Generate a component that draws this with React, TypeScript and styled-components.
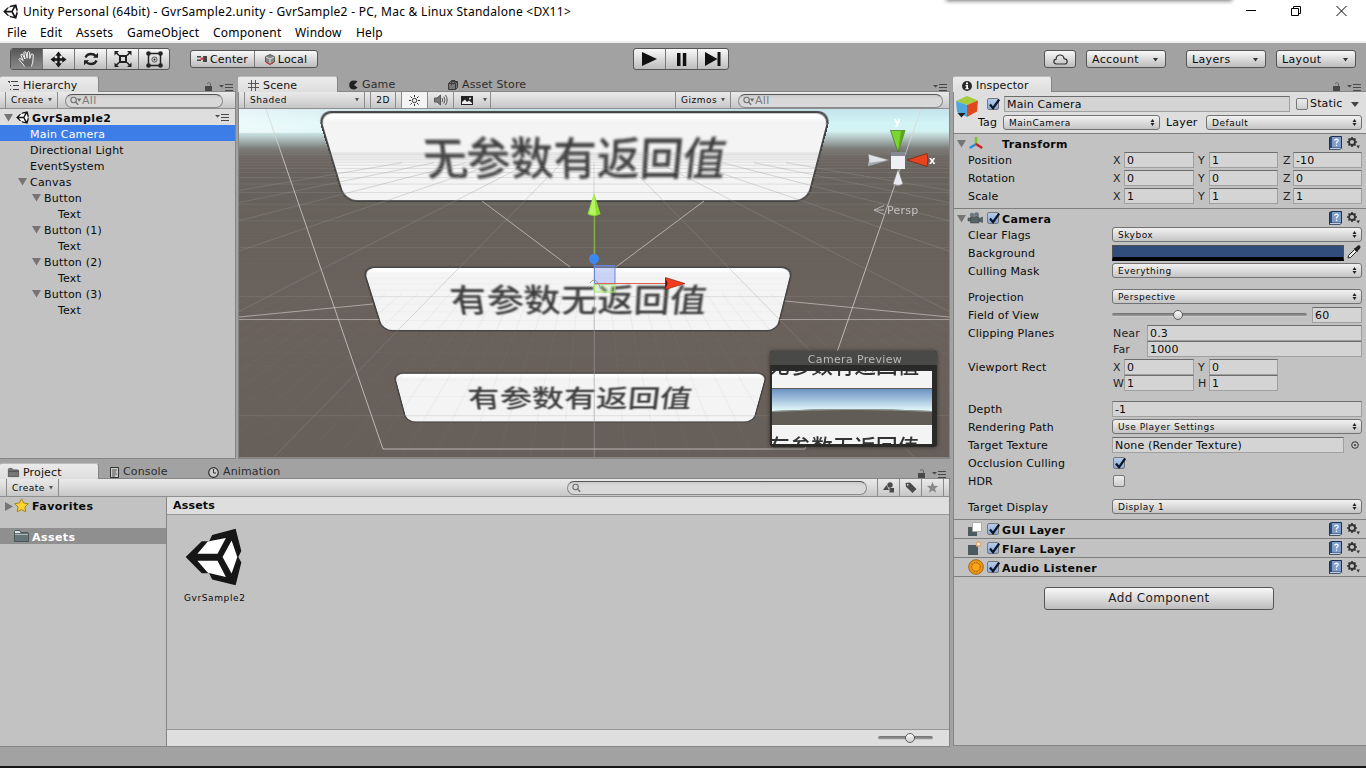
import React from "react";
import styled, { createGlobalStyle, css } from "styled-components";

const ui = `"DejaVu Sans", Verdana, sans-serif`;

const Global = createGlobalStyle`
  * { box-sizing: border-box; }
  html, body { margin: 0; padding: 0; }
  body { width: 1366px; height: 768px; overflow: hidden; background: #a2a2a2; }
`;

/* ---------- shared parts ---------- */

const Svg = styled.svg`
  display: block;
  flex: none;
  overflow: visible;
`;

const Window = styled.div`
  width: 1366px;
  height: 768px;
  display: flex;
  flex-direction: column;
  font: 11px/16px ${ui};
  letter-spacing: 0.15px;
  color: #0a0a0a;
  background: #a2a2a2;
  white-space: nowrap;
  position: relative;
`;

const Gap = styled.div<{ $w?: number; $h?: number }>`
  flex: none;
  width: ${(p) => (p.$w ?? 0) + "px"};
  height: ${(p) => (p.$h ?? 0) + "px"};
`;

const Spring = styled.div`
  flex: 1;
`;

/* ---------- title and menu ---------- */

const TitleBar = styled.header`
  height: 22px;
  flex: none;
  display: flex;
  align-items: center;
  background: #fff;
  padding: 0 19px 0 3px;
`;

const TitleText = styled.span`
  font: 12px/22px "Noto Sans", sans-serif;
  letter-spacing: 0.28px;
  color: #000;
  margin-left: 5px;
  padding-top: 2px;
`;

const WindowControls = styled.div`
  display: flex;
  align-items: center;
  gap: 35px;
  margin-left: auto;
`;

const TopShadow = styled.div`
  position: absolute;
  left: 946px;
  top: -6px;
  width: 286px;
  height: 6px;
  box-shadow: 0 1px 4px rgba(0, 0, 0, 0.55);
`;

const MenuBar = styled.nav`
  height: 21px;
  flex: none;
  display: flex;
  background: #fff;
  border-bottom: 2px solid #f0f0f0;
  padding-left: 7px;
`;

const MenuItem = styled.span<{ $w: number }>`
  font: 12px/21px "Noto Sans", sans-serif;
  letter-spacing: 0.2px;
  color: #000;
  width: ${(p) => p.$w}px;
`;

/* ---------- main toolbar ---------- */

const MainToolbar = styled.div`
  height: 33px;
  flex: none;
  display: flex;
  align-items: flex-start;
  padding: 5px 10px 0;
`;

const raised = css`
  background: linear-gradient(#f8f8f8, #d8d8d8 55%, #bcbcbc);
  border: 1px solid #555;
  border-radius: 3px;
`;

const ButtonGroup = styled.div<{ $small?: boolean }>`
  ${raised}
  display: flex;
  overflow: hidden;
  height: ${(p) => (p.$small ? 18 : 22)}px;
  margin-top: ${(p) => (p.$small ? 2 : 0)}px;
`;

const Segment = styled.div<{ $w: number; $active?: boolean }>`
  width: ${(p) => p.$w}px;
  display: flex;
  align-items: center;
  justify-content: center;
  gap: 3px;
  & + & {
    border-left: 1px solid #777;
  }
  & > span {
    padding-top: 1px;
  }
  ${(p) =>
    p.$active &&
    css`
      background: linear-gradient(#555, #7c7c7c 70%, #888);
    `}
`;

const MenuButton = styled.div<{ $w: number }>`
  ${raised}
  width: ${(p) => p.$w}px;
  height: 18px;
  margin-top: 2px;
  display: flex;
  align-items: center;
  justify-content: space-between;
  padding: 1px 7px 0 5px;
  letter-spacing: 0.35px;
`;

/* ---------- docked panels ---------- */

const Workspace = styled.div`
  height: 671px;
  flex: none;
  display: flex;
`;

const LeftDock = styled.div`
  width: 950px;
  display: flex;
  flex-direction: column;
`;

const UpperDock = styled.div`
  height: 383px;
  display: flex;
`;

const Panel = styled.section<{ $w: number; $h: number }>`
  width: ${(p) => p.$w}px;
  height: ${(p) => p.$h}px;
  flex: none;
  display: flex;
  flex-direction: column;
`;

const TabStrip = styled.div`
  height: 15px;
  flex: none;
  display: flex;
  position: relative;
`;

const Tab = styled.div<{ $w: number; $active?: boolean; $pad?: number }>`
  width: ${(p) => p.$w}px;
  height: 16px;
  display: flex;
  align-items: center;
  gap: 4px;
  padding: 2px 0 0 ${(p) => p.$pad ?? 8}px;
  color: #2c2c2c;
  ${(p) =>
    p.$active &&
    css`
      padding-top: 2px;
      color: #111;
      background: linear-gradient(#eaeaea, #dedede);
      border-right: 1px solid #858585;
      border-top: 1px solid #bbb;
      border-radius: 2px 3px 0 0;
    `}
`;

const StripTools = styled.div<{ $end?: number }>`
  margin-left: auto;
  display: flex;
  align-items: flex-end;
  gap: 6px;
  padding-right: ${(p) => p.$end ?? 3}px;
`;

const PanelBody = styled.div<{ $bg?: string }>`
  flex: 1;
  min-height: 0;
  display: flex;
  flex-direction: column;
  background: ${(p) => p.$bg ?? "#c2c2c2"};
  border: 1px solid #858585;
  border-left-width: 0;
`;

const SceneBody = styled(PanelBody)`
  border-width: 1px 1px 2px 1px;
`;

const PanelToolbar = styled.div<{ $h?: number }>`
  height: ${(p) => p.$h ?? 17}px;
  flex: none;
  display: flex;
  align-items: stretch;
  background: linear-gradient(#e9e9e9, #dadada 50%, #c6c6c6);
  border-bottom: 1px solid #8f8f8f;
  font-size: 9px;
  letter-spacing: 0.5px;
`;

const Cell = styled.div<{ $w: number; $pad?: number; $on?: boolean; $line?: boolean; $center?: boolean }>`
  width: ${(p) => p.$w}px;
  flex: none;
  display: flex;
  align-items: center;
  justify-content: ${(p) => (p.$center ? "center" : "space-between")};
  padding: 0 ${(p) => p.$pad ?? 0}px;
  border-right: ${(p) => (p.$line === false ? 0 : 1)}px solid #8b8b8b;
  background: ${(p) => (p.$on ? "#f4f4f4" : "transparent")};
`;

const Search = styled.div<{ $w: number }>`
  width: ${(p) => p.$w}px;
  height: 14px;
  margin-top: 2px;
  flex: none;
  display: flex;
  align-items: center;
  padding: 0 0 1px 4px;
  gap: 0;
  border: 1px solid #8a8a8a;
  border-top-color: #555;
  border-radius: 7px;
  background: linear-gradient(#c9c9c9, #d8d8d8 30%, #d8d8d8);
  font-size: 11px;
  line-height: 11px;
  letter-spacing: 0.3px;
  color: #7b7b7b;
`;

/* ---------- hierarchy ---------- */

const TreeRow = styled.div<{ $depth?: number; $selected?: boolean; $scene?: boolean }>`
  height: 16px;
  flex: none;
  display: flex;
  align-items: center;
  padding: 0 6px 0 ${(p) => 4 + (p.$depth ?? 0) * 14}px;
  line-height: 16px;
  letter-spacing: 0.2px;
  ${(p) => p.$selected && "background: #3d7de8; color: #fff;"}
  ${(p) => p.$scene && "background: #dedede; font-weight: bold; letter-spacing: .42px;"}
`;

const TreeName = styled.span`
  padding-top: 3px;
`;

const Fold = styled.span`
  width: 12px;
  display: flex;
  justify-content: flex-start;
`;

/* ---------- scene ---------- */

const SceneView = styled.div`
  position: relative;
  width: 710px;
  height: 348px;
  overflow: hidden;
  background:
    linear-gradient(90deg, rgba(255, 255, 255, 0.6), rgba(255, 255, 255, 0) 35%) 0 0 / 100% 24px no-repeat,
    linear-gradient(#c3e3ea, #d2f4f6 14px, #d3f2f2 22px, #a9b8b6 31px, #7f807d 39px, #6b6460 47px, #66615a 90px, #6a615c 200px, #675f5a);
`;

const Quad = styled.div<{ $m: string }>`
  position: absolute;
  left: 0;
  top: 0;
  width: 480px;
  height: 90px;
  display: flex;
  align-items: center;
  justify-content: center;
  transform-origin: 0 0;
  transform: ${(p) => p.$m};
  background: linear-gradient(#fff 3px, #f4f4f4 8px, #f4f4f4);
  border: 2px solid #444;
  border-radius: 14px;
`;

const QuadLabel = styled.span`
  font: 500 42.5px/86px "Noto Sans CJK SC", sans-serif;
  letter-spacing: 0;
  color: #3c3c3c;
  padding-bottom: 6px;
  transform: scaleY(1.05);
  filter: blur(1.2px);
`;

const Overlay = styled(Svg)`
  position: absolute;
  left: 0;
  top: 0;
`;

const Preview = styled.div`
  position: absolute;
  left: 531px;
  top: 242px;
  width: 167px;
  height: 96px;
  border-radius: 3px;
  overflow: hidden;
  background: #2a2b29;
  box-shadow: 0 0 4px rgba(0, 0, 0, 0.5);
`;

const PreviewTitle = styled.div`
  height: 14px;
  line-height: 17px;
  text-align: center;
  padding-left: 3px;
  background: #494947;
  color: #b9b9b9;
  letter-spacing: 0.35px;
`;

const PreviewImage = styled.div`
  width: 160px;
  height: 73px;
  margin: 6px 0 0 2px;
  display: flex;
  flex-direction: column;
  overflow: hidden;
`;

const PreviewStrip = styled.div<{ $h: number; $shift: number }>`
  height: ${(p) => p.$h}px;
  flex: none;
  overflow: hidden;
  background: #f4f4f4;
  & > span {
    display: block;
    margin: ${(p) => p.$shift}px 0 0 -4px;
    font: 500 21.6px/24px "Noto Sans CJK SC", sans-serif;
    letter-spacing: 0;
    color: #333;
    filter: blur(0.6px);
  }
`;

/* ---------- project ---------- */

const ProjectSplit = styled.div`
  flex: 1;
  min-height: 0;
  display: flex;
`;

const Favorites = styled.div`
  width: 167px;
  border-right: 1px solid #858585;
`;

const FolderRow = styled.div<{ $selected?: boolean; $pad: number }>`
  height: 16px;
  display: flex;
  align-items: center;
  gap: 3px;
  padding-left: ${(p) => p.$pad}px;
  font-weight: bold;
  letter-spacing: 0.45px;
  ${(p) => p.$selected && "background: #8f8f8f; color: #fff;"}
  & > span {
    padding-top: 3px;
  }
`;

const AssetPane = styled.div`
  flex: 1;
  display: flex;
  flex-direction: column;
`;

const Crumb = styled.div`
  height: 18px;
  flex: none;
  background: #dedede;
  border-bottom: 1px solid #979797;
  font-weight: bold;
  line-height: 18px;
  padding-left: 6px;
  letter-spacing: 0.2px;
`;

const AssetGrid = styled.div`
  flex: 1;
  padding: 13px 0 0 17px;
`;

const AssetItem = styled.figure`
  width: 62px;
  margin: 0;
  display: flex;
  flex-direction: column;
  align-items: flex-start;
  padding-left: 1px;
`;

const AssetName = styled.figcaption`
  font-size: 9px;
  letter-spacing: 0.6px;
  line-height: 12px;
  margin-top: 6px;
  margin-left: -1px;
`;

const AssetFooter = styled.div`
  height: 17px;
  flex: none;
  background: #dedede;
  border-top: 1px solid #979797;
  display: flex;
  align-items: center;
  justify-content: flex-end;
  padding-right: 16px;
`;

const Track = styled.div<{ $w: number; $pos: number }>`
  width: ${(p) => p.$w}px;
  height: 4px;
  flex: none;
  border-radius: 2px;
  background: linear-gradient(#6f6f6f, #9c9c9c);
  border-bottom: 1px solid #ccc;
  display: flex;
  align-items: center;
  padding-left: ${(p) => p.$pos}px;
`;

const Knob = styled.span`
  width: 10px;
  height: 10px;
  flex: none;
  border-radius: 50%;
  border: 1px solid #5f5f5f;
  background: linear-gradient(#fafafa, #cdcdcd);
`;

/* ---------- inspector ---------- */

const InspectorHeader = styled.div`
  height: 42px;
  flex: none;
  background: #dedede;
  border-bottom: 1px solid #7e7e7e;
  display: flex;
  padding: 4px 4px 0 2px;
`;

const HeaderLines = styled.div`
  flex: 1;
  display: flex;
  flex-direction: column;
  gap: 3px;
`;

const Line = styled.div<{ $pad?: number }>`
  height: 16px;
  display: flex;
  align-items: center;
  padding-left: ${(p) => p.$pad ?? 0}px;
`;

const Field = styled.div<{ $w: number }>`
  width: ${(p) => p.$w}px;
  height: 16px;
  flex: none;
  line-height: 15px;
  padding-left: 2px;
  background: #d4d4d4;
  border: 1px solid #a0a0a0;
  border-top-color: #6c6c6c;
`;

const PopupBox = styled.div<{ $w: number }>`
  width: ${(p) => p.$w}px;
  height: 15px;
  flex: none;
  align-self: flex-start;
  display: flex;
  align-items: center;
  justify-content: space-between;
  padding: 0 4px 0 5px;
  background: linear-gradient(#f1f1f1, #dcdcdc 50%, #c4c4c4);
  border: 1px solid #727272;
  border-radius: 3px;
  font-size: 9px;
  letter-spacing: 0.5px;
`;

const CheckBox = styled.span<{ $on?: boolean }>`
  width: 12px;
  height: 12px;
  flex: none;
  display: block;
  border: 1px solid #777;
  border-radius: 2px;
  background: ${(p) => (p.$on ? "linear-gradient(#b7cbe8, #87a9da)" : "linear-gradient(#ececec, #cfcfcf)")};
`;

const Component = styled.div<{ $h: number }>`
  height: ${(p) => p.$h}px;
  flex: none;
  border-bottom: 1px solid #7e7e7e;
  display: flex;
  flex-direction: column;
`;

const ComponentHead = styled.div`
  height: 18px;
  flex: none;
  display: flex;
  align-items: center;
  padding: 0 6px 0 3px;
  font-weight: bold;
  letter-spacing: 0.35px;
`;

const HeadTitle = styled.span`
  padding: 3px 0 0 3px;
`;

const IconSlot = styled.span<{ $w: number }>`
  width: ${(p) => p.$w}px;
  flex: none;
  display: flex;
  align-items: center;
`;

const PropRow = styled.div<{ $h?: number }>`
  height: ${(p) => p.$h ?? 18}px;
  flex: none;
  display: flex;
  align-items: flex-start;
  padding-left: 14px;
`;

const PropLabel = styled.span`
  width: 144px;
  flex: none;
  line-height: 17px;
`;

const AxisLabel = styled.span<{ $w: number }>`
  width: ${(p) => p.$w}px;
  flex: none;
  padding-left: 1px;
  line-height: 17px;
  color: #222;
`;

const Swatch = styled.div`
  width: 232px;
  height: 16px;
  flex: none;
  background: #304d7b;
  border: 1px solid #505050;
  border-bottom: 4px solid #000;
`;

const AddButton = styled.button`
  ${raised}
  width: 230px;
  height: 23px;
  margin: 10px 0 0 90px;
  padding: 0;
  font: 12px/19px ${ui};
  letter-spacing: 0.35px;
  color: #222;
`;

const StatusBar = styled.footer`
  height: 21px;
  flex: none;
  display: flex;
  align-items: flex-end;
  border-bottom: 2px solid #161616;
`;

/* ---------- icons ---------- */

const UnityLogo = ({ size, h }: { size: number; h: number }) => (
  <Svg width={size} height={h} viewBox="555 217 170 176" preserveAspectRatio="none">
    <path
      fill="#161616"
      d="M557 305 605 257H627L636 238 706 219 723 287 714 305 723 322 706 391 636 373 627 354H605Z"
    />
    <path
      fill="#fff"
      d="M592 295 623 258 677 247 652 295ZM592 316H652L677 366 623 353ZM694 255 711 305 694 355 667 305Z"
    />
  </Svg>
);

const Caret = ({ w = 5, fill = "#333" }: { w?: number; fill?: string }) => (
  <Svg width={w} height={w > 5 ? 5 : 3.5} viewBox="0 0 6 4" preserveAspectRatio="none">
    <path fill={fill} d="M0 0H6L3 4Z" />
  </Svg>
);

const FoldIcon = ({ open = true }: { open?: boolean }) => (
  <Svg width={9} height={9} viewBox="0 0 9 9">
    <path fill="#757575" d={open ? "M0 1H9L4.5 8.5Z" : "M0 0 8 4.5 0 9Z"} />
  </Svg>
);

const Hamburger = () => (
  <Svg width={14} height={8} viewBox="0 0 14 8">
    <path fill="#484848" d="M0 2H5L2.5 4.5ZM6 1H14V2H6ZM6 4H14V5H6ZM6 7H14V8H6Z" />
  </Svg>
);

const Lock = () => (
  <Svg width={8} height={9} viewBox="0 0 8 9">
    <path fill="#484848" d="M0 4H7V9H0Z" />
    <path fill="none" stroke="#666" d="M2 1.6Q4-.4 5.5 1.5V4" />
  </Svg>
);

const Magnifier = ({ caret = true }: { caret?: boolean }) => (
  <Svg width={12} height={9} viewBox="0 0 12 9">
    <circle cx="3.600" cy="4" r="2.700" fill="none" stroke="#707070" strokeWidth="1.100" />
    <path d="M5.600 6 8.200 8.800" stroke="#707070" strokeWidth="1.300" />
    {caret && <path fill="#707070" d="M6.800 2.500H11.500L9.200 5.700Z" />}
  </Svg>
);

const UpDown = () => (
  <Svg width={5} height={7} viewBox="0 0 5 7">
    <path fill="#222" d="M0.500 3H4.500L2.500 0ZM0.500 4H4.500L2.500 7Z" />
  </Svg>
);

const HandIcon = () => (
  <Svg width={18} height={18} viewBox="0 0 18 18">
    <path
      fill="#666"
      stroke="#f4f4f4"
      strokeWidth="1"
      strokeLinejoin="round"
      d="M6.500 16.500Q5.500 14 3.500 12.500L1 9.500Q1.200 8 3 8.800L5.200 10.800 3 5.500Q2.800 3.600 4.500 4.300L7 9 5.800 2.800Q6.200 1 7.800 2.200L9.200 8.200 9.500 2.300Q10.500.8 11.600 2.300L11.800 8.500 13.200 4.200Q14.700 3.300 15.300 5L14.800 12Q14 14 13.500 16.500"
    />
  </Svg>
);

const MoveIcon = () => (
  <Svg width={17} height={17} viewBox="0 0 18 18">
    <path
      fill="#181818"
      d="M9 0.500 12.500 5H10.300V7.700H13V5.500L17.500 9 13 12.500V10.300H10.300V13H12.500L9 17.500 5.500 13H7.700V10.300H5V12.500L.5 9 5 5.500V7.700H7.700V5H5.500Z"
    />
  </Svg>
);

const RotateIcon = () => (
  <Svg width={16} height={16} viewBox="0 0 16 16">
    <path fill="none" stroke="#222" strokeWidth="2.400" d="M2.500 6.500Q4 3 8 3 11 3 12.800 5M13.500 9.500Q12 13 8 13 5 13 3.200 11" />
    <path fill="#222" d="M10 6.800H15V1.800ZM6 9.200H1V14.200Z" />
  </Svg>
);

const ScaleIcon = () => (
  <Svg width={18} height={16} viewBox="0 0 18 16">
    <rect x="6" y="5" width="6" height="6" fill="none" stroke="#222" strokeWidth="2" />
    <path stroke="#222" strokeWidth="1.600" d="M2 1.500 5 4.500M16 1.500 13 4.500M2 14.500 5 11.500M16 14.500 13 11.500" />
    <path fill="#222" d="M.5 0H5L.5 4.500ZM17.500 0H13L17.500 4.500ZM.5 16H5L.5 11.500ZM17.500 16H13L17.500 11.500Z" />
  </Svg>
);

const RectIcon = () => (
  <Svg width={17} height={17} viewBox="0 0 17 17">
    <path fill="none" stroke="#222" strokeWidth="1.500" d="M2.500 2.500H14.500V14.500H2.500Z" />
    <g fill="#222">
      <circle cx="2.500" cy="2.500" r="2.300" />
      <circle cx="14.500" cy="2.500" r="2.300" />
      <circle cx="2.500" cy="14.500" r="2.300" />
      <circle cx="14.500" cy="14.500" r="2.300" />
      <circle cx="8.500" cy="8.500" r="1" />
    </g>
    <circle cx="8.500" cy="8.500" r="2.600" fill="none" stroke="#555" />
  </Svg>
);

const PivotIcon = () => (
  <Svg width={10} height={8} viewBox="0 0 10 8">
    <path fill="#444" d="M0 1H4V2.500H0ZM0 4.500H4V6H0ZM6 1H10V7H6Z" />
    <rect x="3.500" y="2.500" width="3" height="2.500" fill="#d34a55" />
  </Svg>
);

const LocalIcon = () => (
  <Svg width={10} height={11} viewBox="0 0 10 11">
    <path fill="#888" stroke="#555" d="M5 .6 9.400 2.600V8L5 10.400.6 8V2.600Z" />
    <path fill="none" stroke="#ddd" d="M1 3 5 5 9 3M5 5V9.500" />
    <path fill="none" stroke="#c33" d="M1 8.300 5 10.400 9 8.300" />
  </Svg>
);

const PlayIcon = () => (
  <Svg width={15} height={14} viewBox="0 0 15 14">
    <path fill="#111" d="M0 0 15 7 0 14Z" />
  </Svg>
);
const PauseIcon = () => (
  <Svg width={10} height={13} viewBox="0 0 10 13">
    <path fill="#111" d="M0 0H3.500V13H0ZM5.800 0H9.300V13H5.800Z" />
  </Svg>
);
const StepIcon = () => (
  <Svg width={16} height={14} viewBox="0 0 16 14">
    <path fill="#111" d="M0 0 12.500 7 0 14ZM12.500 0H15.500V14H12.500Z" />
  </Svg>
);
const CloudIcon = () => (
  <Svg width={15} height={11} viewBox="0 0 15 11">
    <path
      fill="none"
      stroke="#333"
      strokeWidth="1.200"
      d="M3.600 10Q.8 10 .8 7.600.8 5.600 3 5.400 3.200 1 7.200 1 10.500 1 11 4.600 14.200 5 14.200 7.500 14.200 10 11.500 10Z"
    />
  </Svg>
);

const ListIcon = () => (
  <Svg width={11} height={9} viewBox="0 0 11 9">
    <path fill="#444" d="M0 0H2V1H0ZM3 0H10V1H3ZM2 4H3V5H2ZM5 4H11V5H5ZM2 8H3V9H2ZM5 8H11V9H5ZM1 1H2V2H1Z" />
  </Svg>
);
const GridIcon = () => (
  <Svg width={11} height={11} viewBox="0 0 11 11">
    <path stroke="#555" d="M3.500 0V11M7.500 0V11M0 3.500H11M0 7.500H11" />
  </Svg>
);
const GameIcon = () => (
  <Svg width={9} height={10} viewBox="0 0 9 10">
    <path fill="#222" d="M8.500 1.500 5 5 8.500 7.500Q7 9.700 4.500 9.500.2 9 .2 5 .2.5 5 .4 7.500.4 8.500 1.500Z" />
  </Svg>
);
const StoreIcon = () => (
  <Svg width={10} height={10} viewBox="0 0 10 10">
    <path fill="#777" stroke="#3c3c3c" d="M.5 3.500H7.500V9.500H.5ZM.5 3.500 2.500 1.500H9.500V7.500L7.500 9.500M7.500 3.500 9.500 1.500" />
    <path fill="none" stroke="#3c3c3c" d="M3.500 5V.5H7V4" />
  </Svg>
);
const FolderIcon = ({ dark }: { dark?: boolean }) => (
  <Svg width={dark ? 11 : 15} height={dark ? 9 : 12} viewBox="0 0 15 12">
    <path fill={dark ? "#777" : "#667577"} stroke={dark ? "#444" : "#4a5658"} d="M.5 2Q.5.5 2 .5H5.500L7 2.500H13Q14.500 2.500 14.500 4V11.500H.5Z" />
    <path fill={dark ? "#777" : "#dfe4e4"} d="M1 1H5.500L6.500 3H1Z" />
    <path stroke={dark ? "#444" : "#aab4b5"} d="M1 4.500H14" />
  </Svg>
);
const ConsoleIcon = () => (
  <Svg width={9} height={11} viewBox="0 0 9 11">
    <path fill="#ccc" stroke="#333" d="M.5.5H8.500V10.500H.5Z" />
    <path stroke="#333" d="M2 3H7M2 5H6M2 7H7M2 9H5" strokeWidth=".8" />
  </Svg>
);
const ClockIcon = () => (
  <Svg width={11} height={11} viewBox="0 0 11 11">
    <circle cx="5.500" cy="5.500" r="4.800" fill="#ccc" stroke="#333" strokeWidth="1.200" />
    <path fill="none" stroke="#333" d="M5.500 2V6H8" />
  </Svg>
);
const InfoIcon = () => (
  <Svg width={10} height={10} viewBox="0 0 10 10">
    <circle cx="5" cy="5" r="5" fill="#2a2a2a" />
    <path fill="#fff" d="M4 1.600H6V3.200H4ZM3.500 4H6V7.200H6.800V8.200H3.300V7.200H4.200V5H3.500Z" />
  </Svg>
);
const SunIcon = () => (
  <Svg width={11} height={11} viewBox="0 0 11 11">
    <circle cx="5.500" cy="5.500" r="2.200" fill="none" stroke="#333" />
    <path stroke="#333" d="M5.500 0V2M5.500 9V11M0 5.500H2M9 5.500H11M1.500 1.500 3 3M8 8 9.500 9.500M9.500 1.500 8 3M3 8 1.500 9.500" />
  </Svg>
);
const SpeakerIcon = () => (
  <Svg width={14} height={12} viewBox="0 0 14 12">
    <path fill="#777" stroke="#444" strokeWidth=".8" d="M.5 4H3L6.500 1V11L3 8H.5Z" />
    <path fill="none" stroke="#444" d="M8 4Q9.200 6 8 8M9.800 2.500Q12 6 9.800 9.500M11.500 1Q14.800 6 11.500 11" strokeWidth=".9" />
  </Svg>
);
const ImageIcon = () => (
  <Svg width={12} height={9} viewBox="0 0 12 9">
    <path fill="#222" d="M0 0H12V9H0Z" />
    <path fill="#eee" d="M1 8V6L4 3.500 6 6 8 4.500 11 7V8Z" />
    <circle cx="9" cy="2.500" r="1" fill="#eee" />
  </Svg>
);
const StarIcon = () => (
  <Svg width={15} height={15} viewBox="0 0 15 15">
    <path fill="#ffd42e" stroke="#a8821c" d="M7.500 .8 9.600 5 14.300 5.700 10.900 9 11.700 13.800 7.500 11.600 3.300 13.800 4.100 9 .7 5.700 5.400 5Z" />
  </Svg>
);
const TypeIcon = () => (
  <Svg width={12} height={11} viewBox="0 0 12 11">
    <path fill="#4a4a4a" d="M0 8 3.500 3 6 8Z" />
    <circle cx="7" cy="3" r="2.700" fill="#4a4a4a" />
    <path fill="#4a4a4a" d="M6.500 6H11V10.500H6.500Z" />
  </Svg>
);
const TagIcon = () => (
  <Svg width={12} height={11} viewBox="0 0 12 11">
    <path fill="#4a4a4a" fillRule="evenodd" d="M.5 1 5 .5 11.500 7 7.500 11 1 4.800ZM2 2V3.500H3.500V2Z" />
  </Svg>
);
const SmallStar = () => (
  <Svg width={11} height={11} viewBox="0 0 11 11">
    <path fill="#888" d="M5.500 0 7.100 3.800 11 4.100 8 6.700 9 10.800 5.500 8.600 2 10.800 3 6.700 0 4.100 3.900 3.800Z" />
  </Svg>
);
const Check = () => (
  <Svg width={12} height={12} viewBox="1 1 12 12">
    <path fill="none" stroke="#0d1628" strokeWidth="2.200" d="M3 6.500 6 10.200 12.200 1.500" />
  </Svg>
);
const Cube = () => (
  <Svg width={22} height={22} viewBox="0 0 22 22">
    <path fill="#a6cc3d" d="M0 5 11 0 22 4.500 11 9Z" />
    <path fill="#4fa8dd" d="M0 5 11 9V21L1 16Z" />
    <path fill="#e0481b" d="M22 4.500 11 9V21L21 15.500Z" />
    <path fill="#222" d="M1.500 17H9.500L5.500 21.500Z" />
  </Svg>
);
const AxesIcon = () => (
  <Svg width={14} height={12} viewBox="0 0 14 12">
    <path stroke="#7dc31f" strokeWidth="2.400" d="M7 0V7" />
    <path stroke="#2a8fd8" strokeWidth="2.400" d="M7 7 .8 11" />
    <path stroke="#d11f1f" strokeWidth="2.400" d="M7 7 13.200 11" />
  </Svg>
);
const CameraIcon = () => (
  <Svg width={15} height={12} viewBox="0 0 15 12">
    <circle cx="4" cy="3" r="2.200" fill="#6d7a7c" />
    <circle cx="8.500" cy="2.800" r="2.500" fill="#6d7a7c" />
    <path fill="#566365" stroke="#3f4a4c" strokeWidth=".6" d="M2.500 5H11V11H2.500ZM0 6H2.500V9H0ZM11 7 14.500 5V10.500L11 9Z" />
  </Svg>
);
const BookIcon = () => (
  <Svg width={13} height={14} viewBox="0 0 13 14">
    <path fill="#2b4b7a" stroke="#1e3150" d="M.5 1.500 2.500.5H12.500V12L11 13.500H.5Z" />
    <path fill="#eee" d="M1 12.200H11.500V13.200H1Z" />
    <path fill="#7f9dca" d="M3 1H12V11.500H3Z" />
    <path fill="none" stroke="#fff" strokeWidth="1.200" d="M5.600 4.600Q5.800 3.200 7.500 3.200 9.300 3.300 9.200 4.700 9 5.800 7.500 6.400V7.500M7.500 8.700V10" />
  </Svg>
);
const GearIcon = () => (
  <Svg width={13} height={12} viewBox="0 0 13 12">
    <circle cx="5" cy="5" r="3" fill="none" stroke="#333" strokeWidth="1.800" />
    <path stroke="#333" strokeWidth="1.700" d="M5 0V2M5 8V10M0 5H2M8 5H10M1.500 1.500 2.800 2.800M7.200 7.200 8.500 8.500M8.500 1.500 7.200 2.800M2.800 7.200 1.500 8.500" />
    <path fill="#333" d="M9.500 8.500H13L11.200 11.500Z" />
  </Svg>
);
const DropperIcon = () => (
  <Svg width={14} height={14} viewBox="0 0 14 14">
    <path fill="#eee" stroke="#222" d="M1 13 1.500 10.500 7.500 4.500 9.500 6.500 3.500 12.500Z" />
    <path fill="#222" d="M6.500 3.500 8 3.300 10.500 .7Q12.500-.2 13.300 1.200 13.800 2.500 13 3.500L10.700 6 10.500 7.500Z" />
  </Svg>
);
const GuiIcon = () => (
  <Svg width={14} height={14} viewBox="0 0 14 14">
    <path fill="#4b5a5c" d="M0 5H9V14H0Z" />
    <path fill="#fff" stroke="#aaa" d="M4.500.5H13.500V9.500H4.500Z" />
  </Svg>
);
const FlareIcon = () => (
  <Svg width={14} height={14} viewBox="0 0 14 14">
    <path fill="#4b5a5c" d="M0 4H10V14H0Z" />
    <circle cx="10.500" cy="3" r="3" fill="#e9a870" />
    <circle cx="10.500" cy="3" r="1.300" fill="#fff" />
  </Svg>
);
const AudioIcon = () => (
  <Svg width={16} height={16} viewBox="0 0 16 16">
    <circle cx="8" cy="8" r="7.300" fill="#f2960c" stroke="#9b6a1b" />
    <circle cx="8" cy="8" r="4.500" fill="none" stroke="#b3741a" strokeDasharray="1.600 1" strokeWidth="1.400" />
    <circle cx="8" cy="8" r="3.200" fill="#ffa319" />
  </Svg>
);
const TargetIcon = () => (
  <Svg width={8} height={8} viewBox="0 0 8 8">
    <circle cx="4" cy="4" r="3.300" fill="none" stroke="#333" />
    <circle cx="4" cy="4" r="1" fill="#333" />
  </Svg>
);

/* ---------- scene drawing ---------- */

type Pt = [number, number];

/* CSS matrix that maps a w × h box onto four corners, clockwise from the top left */
function toQuad(w: number, h: number, [p0, p1, p2, p3]: Pt[]) {
  const dx1 = p1[0] - p2[0], dx2 = p3[0] - p2[0], dx3 = p0[0] - p1[0] + p2[0] - p3[0];
  const dy1 = p1[1] - p2[1], dy2 = p3[1] - p2[1], dy3 = p0[1] - p1[1] + p2[1] - p3[1];
  const det = dx1 * dy2 - dx2 * dy1;
  const g = (dx3 * dy2 - dx2 * dy3) / det;
  const k = (dx1 * dy3 - dx3 * dy1) / det;
  const a = p1[0] - p0[0] + g * p1[0], b = p3[0] - p0[0] + k * p3[0];
  const d = p1[1] - p0[1] + g * p1[1], e = p3[1] - p0[1] + k * p3[1];
  return `matrix3d(${[a / w, d / w, 0, g / w, b / h, e / h, 0, k / h, 0, 0, 1, 0, p0[0], p0[1], 0, 1].join(",")})`;
}

const quads: { text: string; pts: Pt[] }[] = [
  { text: "无参数有返回值", pts: [[77.5, 2], [593, 2], [569, 93], [105, 93]] },
  { text: "有参数无返回值", pts: [[122.5, 157.5], [555, 157.5], [538.5, 222.5], [143, 222.5]] },
  { text: "有参数有返回值", pts: [[153.5, 263.500], [529, 263.500], [515, 313.500], [167, 313.500]] },
];

const HX = 355;
const HY = 21;

const Ground = () => {
  const rays: React.ReactNode[] = [];
  for (let i = -60; i <= 60; i++) {
    const major = i % 10 === 0;
    const x = HX + i * 32;
    const t = major ? 0.1 : 0.5;
    rays.push(
      <line
        key={"r" + i}
        x1={HX + (x - HX) * t}
        y1={HY + 327 * t}
        x2={HX + (x - HX) * 1.1}
        y2={HY + 327 * 1.1}
        stroke={major ? "rgba(150,150,148,.34)" : "rgba(150,150,150,.1)"}
      />
    );
  }
  const rows: React.ReactNode[] = [];
  for (let n = 0; n < 170; n++) {
    const major = n % 10 === 0;
    if (!major && n > 40) continue;
    const y = HY + 1 / (0.0035 + 0.00025 * n);
    rows.push(
      <line
        key={"h" + n}
        x1={0}
        x2={710}
        y1={y}
        y2={y}
        stroke={major ? "rgba(150,150,150,.24)" : "rgba(150,150,150,.06)"}
      />
    );
  }
  return (
    <g>
      {rays}
      {rows}
    </g>
  );
};

const SceneLines = () => (
  <Overlay width={710} height={348} viewBox="0 0 710 348">
    <Ground />
    <g fill="none" stroke="rgba(215,213,208,.75)">
      <path d="M27 0 144 340H566L597 246M682 0 597 246" />
      <path d="M243 92 331 158M465 92 377 158" strokeWidth=".9" />
      <path d="M0 208 134 195M546 192 710 208" strokeWidth=".8" />
      <path d="M0 210.500H140M541 210.500H710" strokeWidth=".7" />
    </g>
    <path stroke="rgba(160,160,160,.35)" d="M355.500 100V348" />
    <path stroke="#7fae45" strokeWidth="1.500" d="M355.500 106V150" />
    <path fill="#8ce02e" d="M355 84 361.500 105Q355 109 348.500 105Z" />
    <path fill="#b7f567" d="M355 84 357 106 350 105Z" />
    <circle cx="355" cy="150" r="5" fill="#3f87f2" />
    <path stroke="#4b7be0" d="M355.500 155V175" />
    <path fill="rgba(150,170,250,.45)" stroke="#6487dd" d="M355.500 156.500H376V175H355.500Z" />
    <path fill="rgba(190,240,160,.35)" stroke="#a4e86d" d="M355.500 175H376V183H355.500Z" />
    <path stroke="#e2604b" d="M356 174.500H428" />
    <path fill="#f23c1e" stroke="#7c1c0d" strokeWidth=".6" d="M426.500 168.500 446 174.500 426.500 180.500Z" />
    <path fill="#4a0f08" d="M426.500 168.500 428.500 174.500 426.500 180.500Z" />
    <path fill="none" stroke="#999" d="M351 174Q355 168 359 174L362 180" />

    <path fill="#dfe1e6" stroke="#777" strokeWidth=".6" d="M629 45Q631 51 629 57L650 51Z" />
    <path fill="#a6a9b0" d="M629 54 650 51 629 57Z" />
    <path fill="#7ad62f" stroke="#456e22" strokeWidth=".7" d="M651.500 21.500H666L659 43Z" />
    <path fill="#5aa71f" d="M662 21.500H666L659 43Z" />
    <path fill="#e9eaee" stroke="#777" strokeWidth=".6" d="M659 60 664 75Q659 78 654 75Z" />
    <path fill="#868993" d="M652 43H666V48H652Z" />
    <path fill="#eef0f4" d="M652 47H666V60H652Z" />
    <path fill="#e8421f" stroke="#6d2415" strokeWidth=".7" d="M668 51 688 44.500Q690 51 688 57.500Z" />
    <g fill="#fff" fontFamily="DejaVu Sans" fontWeight="bold" fontSize="10">
      <text x="655" y="16">y</text>
      <text x="690" y="54.500">x</text>
    </g>
    <path fill="none" stroke="#bbb" strokeWidth=".9" d="M645 96.500 635 101 645 105.500M635 101H645" />
    <text x="648" y="105" fill="#c4c2c0" fontFamily="DejaVu Sans" fontSize="11" letterSpacing=".25">Persp</text>
  </Overlay>
);

/* ---------- composed rows ---------- */

const Popup = ({ w, children }: { w: number; children: React.ReactNode }) => (
  <PopupBox $w={w}>
    <span>{children}</span>
    <UpDown />
  </PopupBox>
);

const Prop = ({ label, h, children }: { label?: string; h?: number; children: React.ReactNode }) => (
  <PropRow $h={h}>
    <PropLabel>{label}</PropLabel>
    {children}
  </PropRow>
);

const Vector = ({ axes }: { axes: [string, string][] }) => (
  <>
    {axes.map(([name, value], i) => (
      <React.Fragment key={name}>
        {i > 0 && <Gap $w={i === 1 ? 3 : 4} />}
        <AxisLabel $w={i === 2 ? 11 : 12}>{name}</AxisLabel>
        <Field $w={i === 0 ? 70 : 69}>{value}</Field>
      </React.Fragment>
    ))}
  </>
);

const HeadTools = () => (
  <>
    <Spring />
    <BookIcon />
    <Gap $w={5} />
    <GearIcon />
  </>
);

const Toggle = ({ on }: { on?: boolean }) => <CheckBox $on={on}>{on && <Check />}</CheckBox>;

const tree: [string, number, boolean][] = [
  ["Directional Light", 1, false],
  ["EventSystem", 1, false],
  ["Canvas", 1, true],
  ["Button", 2, true],
  ["Text", 3, false],
  ["Button (1)", 2, true],
  ["Text", 3, false],
  ["Button (2)", 2, true],
  ["Text", 3, false],
  ["Button (3)", 2, true],
  ["Text", 3, false],
];

const Hierarchy = () => (
  <Panel $w={236} $h={383}>
    <TabStrip>
      <Tab $w={99} $active>
        <ListIcon />
        Hierarchy
      </Tab>
      <StripTools>
        <Lock />
        <Hamburger />
      </StripTools>
    </TabStrip>
    <PanelBody>
      <PanelToolbar>
        <Cell $w={6} />
        <Cell $w={52} $pad={5}>
          Create <Caret w={4} fill="#555" />
        </Cell>
        <Gap $w={7} />
        <Search $w={158}>
          <Magnifier />
          All
        </Search>
      </PanelToolbar>
      <TreeRow $scene>
        <Fold>
          <FoldIcon />
        </Fold>
        <UnityLogo size={13} h={13} />
        <Gap $w={3} />
        <TreeName>GvrSample2</TreeName>
        <Spring />
        <Hamburger />
      </TreeRow>
      <TreeRow $depth={1} $selected>
        <Fold />
        <TreeName>Main Camera</TreeName>
      </TreeRow>
      {tree.map(([name, depth, open], i) => (
        <TreeRow key={i} $depth={depth}>
          <Fold>{open && <FoldIcon />}</Fold>
          <TreeName>{name}</TreeName>
        </TreeRow>
      ))}
    </PanelBody>
  </Panel>
);

const Scene = () => (
  <Panel $w={712} $h={383}>
    <TabStrip>
      <Tab $w={100} $active $pad={10}>
        <GridIcon />
        Scene
      </Tab>
      <Tab $w={101} $pad={11}>
        <GameIcon />
        Game
      </Tab>
      <Tab $w={100} $pad={9}>
        <StoreIcon />
        Asset Store
      </Tab>
      <StripTools>
        <Hamburger />
      </StripTools>
    </TabStrip>
    <SceneBody>
      <PanelToolbar>
        <Cell $w={6} />
        <Cell $w={120} $pad={5}>
          Shaded <Caret w={4} fill="#555" />
        </Cell>
        <Cell $w={6} />
        <Cell $w={25} $center>
          2D
        </Cell>
        <Cell $w={6} />
        <Cell $w={26} $center $on>
          <SunIcon />
        </Cell>
        <Cell $w={26} $center>
          <SpeakerIcon />
        </Cell>
        <Cell $w={26} $center $line={false}>
          <ImageIcon />
        </Cell>
        <Cell $w={11} $center>
          <Caret w={4} fill="#555" />
        </Cell>
        <Gap $w={184} />
        <Cell $w={1} />
        <Cell $w={55} $pad={5}>
          Gizmos <Caret w={4} fill="#555" />
        </Cell>
        <Gap $w={7} />
        <Search $w={205}>
          <Magnifier />
          All
        </Search>
      </PanelToolbar>
      <SceneView>
        {quads.map((q) => (
          <Quad key={q.text} $m={toQuad(480, 90, q.pts)}>
            <QuadLabel>{q.text}</QuadLabel>
          </Quad>
        ))}
        <SceneLines />
        <Preview>
          <PreviewTitle>Camera Preview</PreviewTitle>
          <PreviewImage>
            <PreviewStrip $h={17} $shift={-19}>
              <span>无参数有返回值</span>
            </PreviewStrip>
            <Svg width={160} height={38} viewBox="0 0 160 38">
              <defs>
                <linearGradient id="sky" x1="0" y1="0" x2="0" y2="1">
                  <stop offset="0" stopColor="#6c92c4" />
                  <stop offset=".5" stopColor="#a6c4de" />
                  <stop offset="1" stopColor="#e6fbfb" />
                </linearGradient>
              </defs>
              <path fill="#625c57" d="M0 0H160V38H0Z" />
              <path fill="url(#sky)" d="M0 1H160V23Q80 19 0 23Z" />
              <path fill="none" stroke="#8f9a98" d="M0 23.500Q80 19.500 160 23.500" />
              <path stroke="#fff" d="M0 37.500H160" />
            </Svg>
            <PreviewStrip $h={18} $shift={8}>
              <span>有参数无返回值</span>
            </PreviewStrip>
          </PreviewImage>
        </Preview>
      </SceneView>
    </SceneBody>
  </Panel>
);

const Project = () => (
  <Panel $w={950} $h={284}>
    <TabStrip>
      <Tab $w={99} $active>
        <FolderIcon dark />
        <span>Project</span>
      </Tab>
      <Tab $w={98} $pad={11}>
        <ConsoleIcon />
        Console
      </Tab>
      <Tab $w={99} $pad={11}>
        <ClockIcon />
        Animation
      </Tab>
      <StripTools $end={4}>
        <Lock />
        <Hamburger />
      </StripTools>
    </TabStrip>
    <PanelBody>
      <PanelToolbar $h={18}>
        <Cell $w={7} />
        <Cell $w={52} $pad={5}>
          Create <Caret w={4} fill="#555" />
        </Cell>
        <Spring />
        <Search $w={300}>
          <Magnifier caret={false} />
        </Search>
        <Gap $w={10} />
        <Cell $w={1} />
        <Cell $w={22} $center>
          <TypeIcon />
        </Cell>
        <Cell $w={22} $center>
          <TagIcon />
        </Cell>
        <Cell $w={22} $center>
          <SmallStar />
        </Cell>
        <Gap $w={5} />
      </PanelToolbar>
      <ProjectSplit>
        <Favorites>
          <FolderRow $pad={5}>
            <IconSlot $w={6}>
              <FoldIcon open={false} />
            </IconSlot>
            <StarIcon />
            <span>Favorites</span>
          </FolderRow>
          <Gap $h={15} />
          <FolderRow $selected $pad={14}>
            <FolderIcon />
            <span>Assets</span>
          </FolderRow>
        </Favorites>
        <AssetPane>
          <Crumb>Assets</Crumb>
          <AssetGrid>
            <AssetItem>
              <UnityLogo size={57} h={58} />
              <AssetName>GvrSample2</AssetName>
            </AssetItem>
          </AssetGrid>
          <AssetFooter>
            <Track $w={55} $pos={27}>
              <Knob />
            </Track>
          </AssetFooter>
        </AssetPane>
      </ProjectSplit>
    </PanelBody>
  </Panel>
);

const simpleComponents: [string, React.ReactNode][] = [
  ["GUI Layer", <GuiIcon />],
  ["Flare Layer", <FlareIcon />],
  ["Audio Listener", <AudioIcon />],
];

const InspectorBody = styled(PanelBody)`
  border-width: 1px 0 1px 1px;
`;

const Inspector = () => (
  <Panel $w={413} $h={670}>
    <TabStrip>
      <Tab $w={99} $active $pad={9}>
        <InfoIcon />
        Inspector
      </Tab>
      <StripTools $end={5}>
        <Lock />
        <Hamburger />
      </StripTools>
    </TabStrip>
    <InspectorBody>
      <InspectorHeader>
        <Cube />
        <HeaderLines>
          <Line $pad={9}>
            <Toggle on />
            <Gap $w={5} />
            <Field $w={286}>Main Camera</Field>
            <Gap $w={6} />
            <Toggle />
            <Gap $w={2} />
            <span>Static</span>
            <Spring />
            <Caret w={8} fill="#444" />
            <Gap $w={3} />
          </Line>
          <Line>
            <span>Tag</span>
            <Gap $w={6} />
            <Popup w={157}>MainCamera</Popup>
            <Gap $w={6} />
            <span>Layer</span>
            <Spring />
            <Popup w={156}>Default</Popup>
          </Line>
        </HeaderLines>
      </InspectorHeader>

      <Component $h={75}>
        <ComponentHead>
          <IconSlot $w={12}>
            <FoldIcon />
          </IconSlot>
          <IconSlot $w={30}>
            <AxesIcon />
          </IconSlot>
          <HeadTitle>Transform</HeadTitle>
          <HeadTools />
        </ComponentHead>
        <Prop label="Position">
          <Vector axes={[["X", "0"], ["Y", "1"], ["Z", "-10"]]} />
        </Prop>
        <Prop label="Rotation">
          <Vector axes={[["X", "0"], ["Y", "0"], ["Z", "0"]]} />
        </Prop>
        <Prop label="Scale">
          <Vector axes={[["X", "1"], ["Y", "1"], ["Z", "1"]]} />
        </Prop>
      </Component>

      <Component $h={311}>
        <ComponentHead>
          <IconSlot $w={11}>
            <FoldIcon />
          </IconSlot>
          <IconSlot $w={19}>
            <CameraIcon />
          </IconSlot>
          <Toggle on />
          <HeadTitle>Camera</HeadTitle>
          <HeadTools />
        </ComponentHead>
        <Prop label="Clear Flags">
          <Popup w={250}>Skybox</Popup>
        </Prop>
        <Prop label="Background">
          <Swatch />
          <Gap $w={3} />
          <DropperIcon />
        </Prop>
        <Prop label="Culling Mask" h={26}>
          <Popup w={250}>Everything</Popup>
        </Prop>
        <Prop label="Projection">
          <Popup w={250}>Perspective</Popup>
        </Prop>
        <Prop label="Field of View">
          <Line>
            <Track $w={195} $pos={61}>
              <Knob />
            </Track>
            <Gap $w={5} />
            <Field $w={50}>60</Field>
          </Line>
        </Prop>
        <Prop label="Clipping Planes" h={16}>
          <AxisLabel $w={35}>Near</AxisLabel>
          <Field $w={215}>0.3</Field>
        </Prop>
        <Prop>
          <AxisLabel $w={35}>Far</AxisLabel>
          <Field $w={215}>1000</Field>
        </Prop>
        <Prop label="Viewport Rect" h={16}>
          <Vector axes={[["X", "0"], ["Y", "0"]]} />
        </Prop>
        <Prop h={26}>
          <Vector axes={[["W", "1"], ["H", "1"]]} />
        </Prop>
        <Prop label="Depth">
          <Field $w={250}>-1</Field>
        </Prop>
        <Prop label="Rendering Path">
          <Popup w={250}>Use Player Settings</Popup>
        </Prop>
        <Prop label="Target Texture">
          <Field $w={232}>None (Render Texture)</Field>
          <Line $pad={7}>
            <TargetIcon />
          </Line>
        </Prop>
        <Prop label="Occlusion Culling">
          <Line $pad={1}>
            <Toggle on />
          </Line>
        </Prop>
        <Prop label="HDR" h={26}>
          <Line $pad={1}>
            <Toggle />
          </Line>
        </Prop>
        <Prop label="Target Display">
          <Popup w={250}>Display 1</Popup>
        </Prop>
      </Component>

      {simpleComponents.map(([name, icon]) => (
        <Component key={name} $h={19}>
          <ComponentHead>
            <Gap $w={11} />
            <IconSlot $w={19}>{icon}</IconSlot>
            <Toggle on />
            <HeadTitle>{name}</HeadTitle>
            <HeadTools />
          </ComponentHead>
        </Component>
      ))}
      <AddButton>Add Component</AddButton>
    </InspectorBody>
  </Panel>
);

export default function App() {
  return (
    <Window>
      <Global />
      <TitleBar>
        <UnityLogo size={15} h={15} />
        <TitleText>Unity Personal (64bit) - GvrSample2.unity - GvrSample2 - PC, Mac &amp; Linux Standalone &lt;DX11&gt;</TitleText>
        <WindowControls>
          <Svg width={10} height={10} viewBox="0 0 10 10">
            <path d="M0 4.500H10" stroke="#000" />
          </Svg>
          <Svg width={10} height={10} viewBox="0 0 10 10">
            <path d="M.5 2.500H7.500V9.500H.5ZM2.500 2.500V.5H9.500V7.500H7.500" fill="none" stroke="#000" />
          </Svg>
          <Svg width={11} height={10} viewBox="0 0 11 10">
            <path d="M.5 0 10.500 10M10.500 0 .5 10" stroke="#000" />
          </Svg>
        </WindowControls>
      </TitleBar>
      <TopShadow />
      <MenuBar>
        <MenuItem $w={33}>File</MenuItem>
        <MenuItem $w={36}>Edit</MenuItem>
        <MenuItem $w={51}>Assets</MenuItem>
        <MenuItem $w={86}>GameObject</MenuItem>
        <MenuItem $w={82}>Component</MenuItem>
        <MenuItem $w={61}>Window</MenuItem>
        <MenuItem $w={40}>Help</MenuItem>
      </MenuBar>
      <MainToolbar>
        <ButtonGroup>
          <Segment $w={31} $active>
            <HandIcon />
          </Segment>
          <Segment $w={32}>
            <MoveIcon />
          </Segment>
          <Segment $w={32}>
            <RotateIcon />
          </Segment>
          <Segment $w={32}>
            <ScaleIcon />
          </Segment>
          <Segment $w={31}>
            <RectIcon />
          </Segment>
        </ButtonGroup>
        <Gap $w={20} />
        <ButtonGroup $small>
          <Segment $w={63}>
            <PivotIcon />
            <span>Center</span>
          </Segment>
          <Segment $w={63}>
            <LocalIcon />
            <span>Local</span>
          </Segment>
        </ButtonGroup>
        <Gap $w={315} />
        <ButtonGroup>
          <Segment $w={31}>
            <PlayIcon />
          </Segment>
          <Segment $w={32}>
            <PauseIcon />
          </Segment>
          <Segment $w={31}>
            <StepIcon />
          </Segment>
        </ButtonGroup>
        <Spring />
        <ButtonGroup $small>
          <Segment $w={30}>
            <CloudIcon />
          </Segment>
        </ButtonGroup>
        <Gap $w={10} />
        <MenuButton $w={80}>
          Account <Caret />
        </MenuButton>
        <Gap $w={20} />
        <MenuButton $w={80}>
          Layers <Caret />
        </MenuButton>
        <Gap $w={10} />
        <MenuButton $w={80}>
          Layout <Caret />
        </MenuButton>
      </MainToolbar>
      <Workspace>
        <LeftDock>
          <UpperDock>
            <Hierarchy />
            <Gap $w={2} />
            <Scene />
          </UpperDock>
          <Gap $h={4} />
          <Project />
        </LeftDock>
        <Gap $w={3} />
        <Inspector />
      </Workspace>
      <StatusBar />
    </Window>
  );
}
